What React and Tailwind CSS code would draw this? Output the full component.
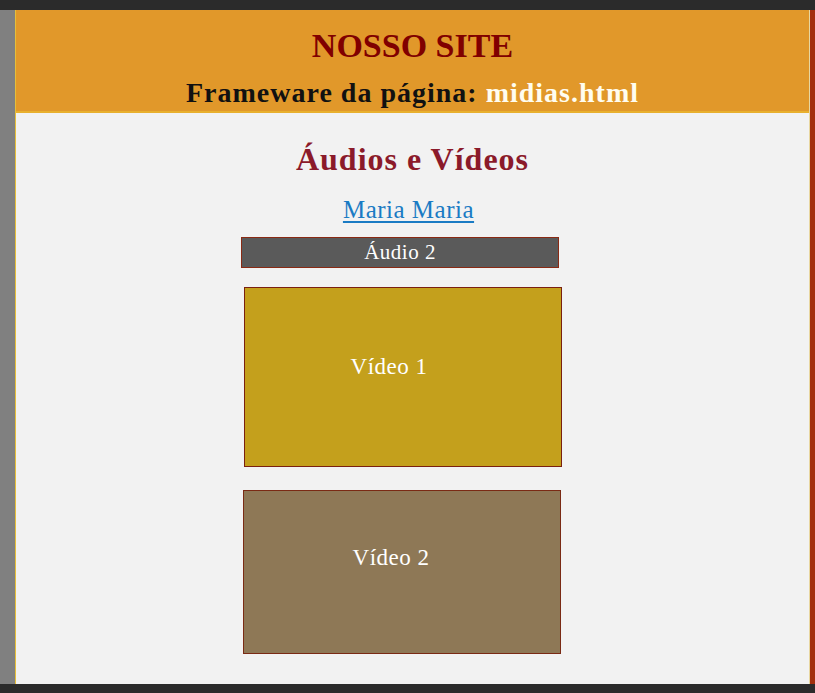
export default function App() {
  const serif = { fontFamily: '"Liberation Serif", "Times New Roman", serif' };

  return (
    <div className="h-[693px] w-[815px] flex flex-col bg-[#2b2b2b] overflow-hidden" style={serif}>
      {/* top window bar */}
      <div className="h-[10px] bg-[#2b2b2b]" />

      <div className="flex h-[674px]">
        {/* left gutter */}
        <div className="w-[15px] bg-[#808080]" />

        {/* page */}
        <div className="flex-1 flex flex-col bg-[#f2f2f2] border-l border-r border-l-[#e6bf3a] border-r-[#e8d7a0]">
          <header className="h-[103px] bg-[#e1982a] border-b-2 border-[#e8b02e] flex flex-col items-center">
            <h1 className="mt-[17px] text-[34px] leading-[38px] font-bold text-[#800000]">NOSSO SITE</h1>
            <h2 className="mt-[12px] text-[28px] leading-[32px] font-bold tracking-[1px] text-[#111]">
              Frameware da página: <span className="text-[#fffdf0]">midias.html</span>
            </h2>
          </header>

          <main className="flex flex-col">
            <h3 className="mt-[28px] text-center text-[32px] leading-[36px] font-bold tracking-[1px] text-[#8b1a2a]">
              Áudios e Vídeos
            </h3>
            <a
              href="#"
              className="mt-[19px] self-center -translate-x-[4px] text-[25px] leading-[28px] tracking-[0.5px] text-[#1a7bc4] underline underline-offset-[3px]"
            >
              Maria Maria
            </a>

            <div className="mt-[13px] ml-[225px] w-[318px] h-[31px] bg-[#5a5a5a] border border-[#8a2a14] flex items-center justify-center text-[21px] tracking-[0.5px] text-white">
              Áudio 2
            </div>

            <div className="mt-[19px] ml-[228px] w-[318px] h-[180px] bg-[#c4a01c] border border-[#7a2010]">
              <div className="w-[288px] pt-[65px] text-center text-[23px] leading-[28px] tracking-[0.5px] text-white">
                Vídeo 1
              </div>
            </div>

            <div className="mt-[23px] ml-[227px] w-[318px] h-[164px] bg-[#8e7856] border border-[#7a2a14]">
              <div className="w-[294px] pt-[53px] text-center text-[23px] leading-[28px] tracking-[0.5px] text-white">
                Vídeo 2
              </div>
            </div>
          </main>
        </div>

        {/* right accent */}
        <div className="w-[5px] bg-[#a3300e]" />
      </div>

      {/* bottom bar */}
      <div className="h-[9px] bg-[#2b2b2b]" />
    </div>
  );
}
